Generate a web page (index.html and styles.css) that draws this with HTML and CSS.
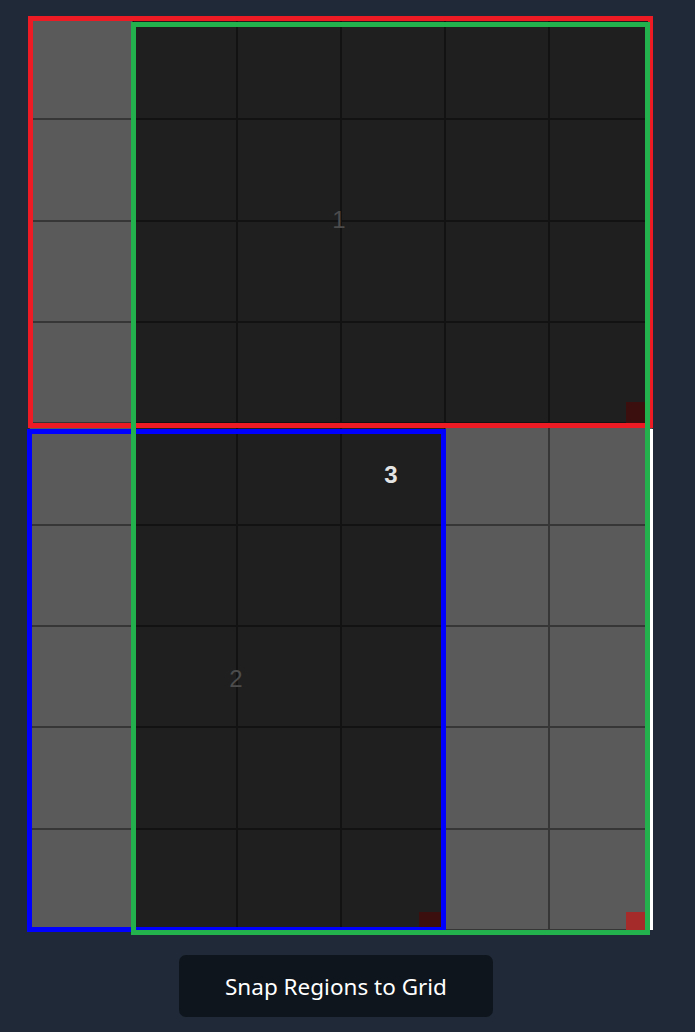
FILE: index.html
```html
<!DOCTYPE html>
<html lang="en">
<head>
<meta charset="utf-8">
<title>Snap Regions to Grid</title>
<link rel="stylesheet" href="styles.css">
</head>
<body>
<main class="app">
  <div class="board">
    <div class="cells">
      <div class="cell gray"></div><div class="cell dark"></div><div class="cell dark"></div><div class="cell dark"></div><div class="cell dark"></div><div class="cell dark"></div>
      <div class="cell gray"></div><div class="cell dark"></div><div class="cell dark"></div><div class="cell dark"></div><div class="cell dark"></div><div class="cell dark"></div>
      <div class="cell gray"></div><div class="cell dark"></div><div class="cell dark"></div><div class="cell dark"></div><div class="cell dark"></div><div class="cell dark"></div>
      <div class="cell gray"></div><div class="cell dark"></div><div class="cell dark"></div><div class="cell dark"></div><div class="cell dark"></div><div class="cell dark"></div>
      <div class="cell gray"></div><div class="cell dark"></div><div class="cell dark"></div><div class="cell dark"></div><div class="cell gray"></div><div class="cell gray"></div>
      <div class="cell gray"></div><div class="cell dark"></div><div class="cell dark"></div><div class="cell dark"></div><div class="cell gray"></div><div class="cell gray"></div>
      <div class="cell gray"></div><div class="cell dark"></div><div class="cell dark"></div><div class="cell dark"></div><div class="cell gray"></div><div class="cell gray"></div>
      <div class="cell gray"></div><div class="cell dark"></div><div class="cell dark"></div><div class="cell dark"></div><div class="cell gray"></div><div class="cell gray"></div>
      <div class="cell gray"></div><div class="cell dark"></div><div class="cell dark"></div><div class="cell dark"></div><div class="cell gray"></div><div class="cell gray"></div>
    </div>

    <div class="edge-strip"></div>

    <div class="handle handle-1"></div>
    <div class="handle handle-2"></div>
    <div class="handle handle-3"></div>

    <span class="label label-1">1</span>
    <span class="label label-2">2</span>
    <span class="label label-3">3</span>

    <div class="region region-red"></div>
    <div class="region region-blue"></div>
    <div class="region region-green"></div>
  </div>

  <div class="actions">
    <button class="snap-btn" type="button">Snap Regions to Grid</button>
  </div>
</main>
</body>
</html>
```

FILE: styles.css
```css
* {
  box-sizing: border-box;
}

html,
body {
  margin: 0;
  padding: 0;
  background: #1f2937;
  font-family: "Liberation Sans", Arial, sans-serif;
}

.app {
  display: flex;
  flex-direction: column;
  width: 653px;
  padding: 18px 0 0 29px;
}

.board {
  position: relative;
  width: 624px;
  height: 912px;
}

.cells {
  display: grid;
  grid-template-columns: repeat(6, 1fr);
  grid-template-rows: repeat(9, 1fr);
  width: 100%;
  height: 100%;
}

.cell {
  box-shadow: inset 0 0 0 1px rgba(0, 0, 0, 0.4);
}

.cell.gray {
  background: #5a5a5a;
}

.cell.dark {
  background: #1f1f1f;
}

.edge-strip {
  position: absolute;
  left: 621px;
  top: 411px;
  width: 3px;
  height: 501px;
  background: #ffffff;
}

.handle {
  position: absolute;
  background: #3c0f0f;
}

.handle-1 {
  left: 597px;
  top: 384px;
  width: 19px;
  height: 21px;
}

.handle-2 {
  left: 390px;
  top: 894px;
  width: 22px;
  height: 15px;
}

.handle-3 {
  left: 597px;
  top: 894px;
  width: 19px;
  height: 18px;
  background: #a52a2a;
}

.label {
  position: absolute;
  font-size: 24px;
  line-height: 24px;
  transform: translate(-50%, -50%);
  color: #4c4c4c;
}

.label-1 {
  left: 310px;
  top: 202px;
}

.label-2 {
  left: 207px;
  top: 661px;
}

.label-3 {
  left: 362px;
  top: 457px;
  color: #e4e4e4;
  font-weight: bold;
}

.region {
  position: absolute;
  border: 5px solid;
}

.region-red {
  left: -1px;
  top: -2px;
  width: 625px;
  height: 412px;
  border-color: #ed1c24;
}

.region-blue {
  left: -2px;
  top: 411px;
  width: 419px;
  height: 503px;
  border-color: #0000ff;
}

.region-green {
  left: 102px;
  top: 4px;
  width: 519px;
  height: 913px;
  border-color: #22b14c;
}

.actions {
  display: flex;
  justify-content: center;
  padding-right: 10px;
  margin-top: 25px;
}

.snap-btn {
  width: 314px;
  height: 62px;
  border: none;
  border-radius: 7px;
  background: #0e151d;
  color: #ffffff;
  font-family: "Noto Sans", "Open Sans", sans-serif;
  font-size: 22.5px;
  padding: 0;
}
```
